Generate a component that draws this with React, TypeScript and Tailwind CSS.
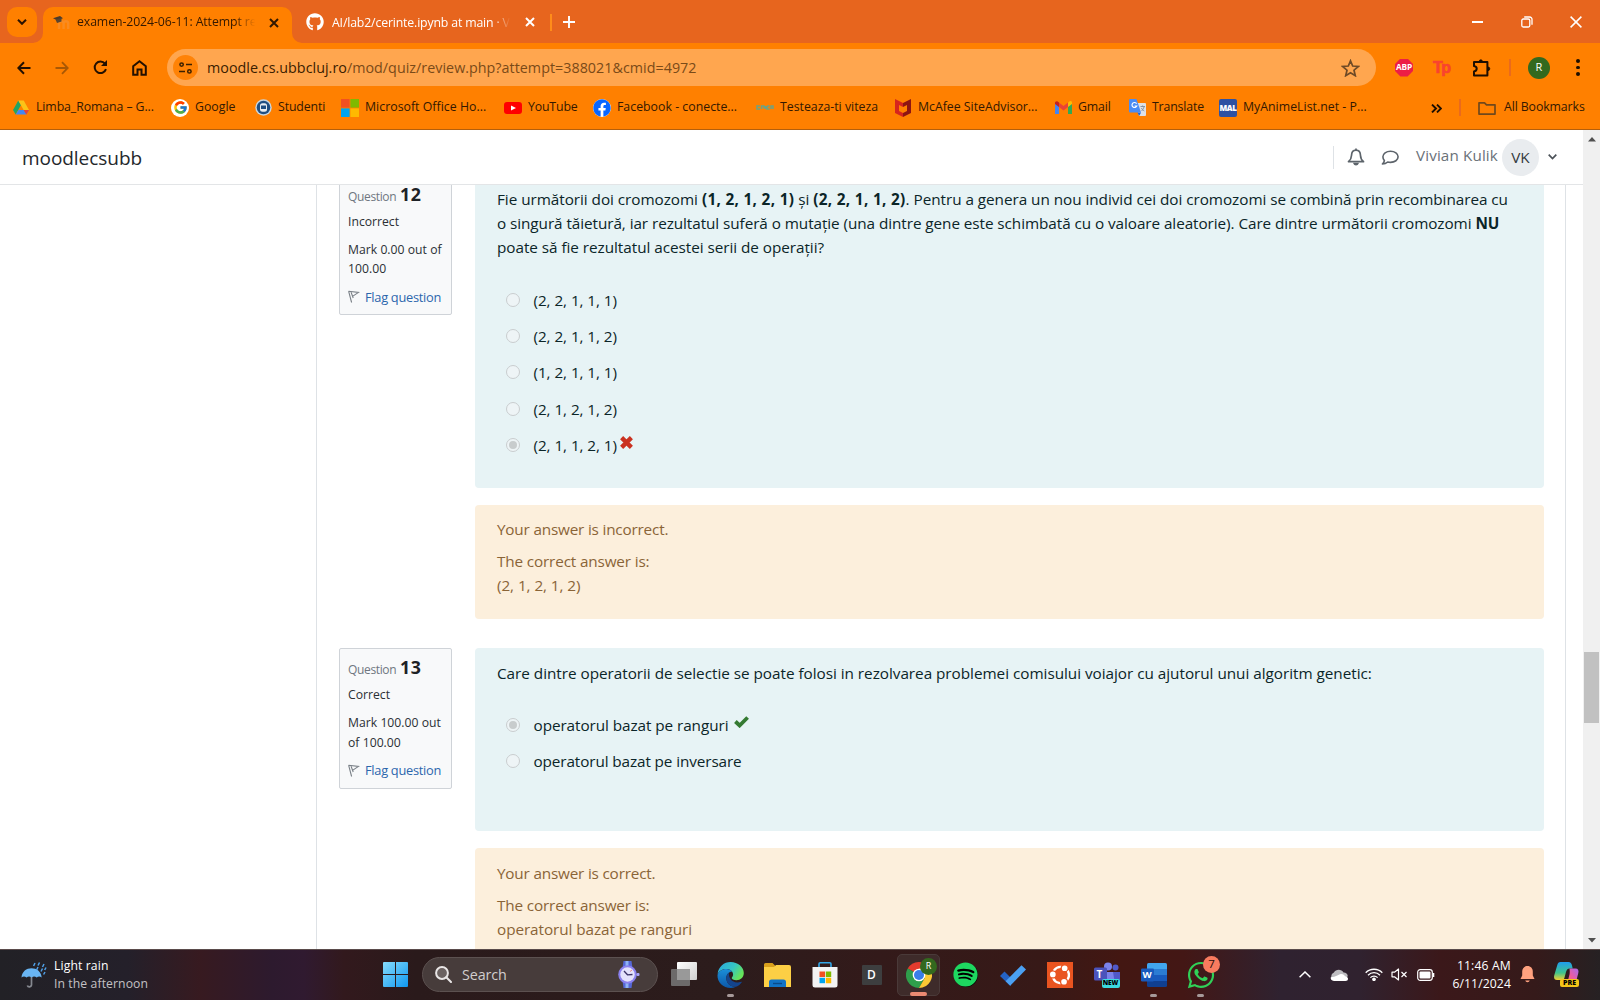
import React from "react";
import { FaGithub, FaFacebook, FaSpotify, FaWhatsapp } from "react-icons/fa";
import { FcGoogle } from "react-icons/fc";
import { SiUbuntu } from "react-icons/si";

type Kids = { children?: React.ReactNode };

/* ---------- small drawings ---------- */

function Cross({ className = "" }: { className?: string }) {
  return (
    <svg className={className} width="10" height="10" viewBox="0 0 10 10" stroke="currentColor" strokeWidth="2" fill="none">
      <path d="M1 1l8 8M9 1l-8 8" />
    </svg>
  );
}

function DriveIcon() {
  return (
    <svg width="16" height="15" viewBox="0 0 16 15">
      <path d="M5.3 0.5L0 10l2.7 4.5L8 5z" fill="#21a464" />
      <path d="M5.3 0.5h5.4L16 10h-5.4z" fill="#fbc318" />
      <path d="M5.4 10H16l-2.7 4.5H2.7z" fill="#4387f5" />
      <path d="M10.6 10H16l-2.7 4.5z" fill="#ea4335" />
    </svg>
  );
}
function GoogleIcon() {
  return (
    <span className="flex size-[18px] items-center justify-center rounded-full bg-white">
      <FcGoogle size={15} />
    </span>
  );
}
function StudentiIcon() {
  return (
    <svg width="17" height="17" viewBox="0 0 17 17">
      <circle cx="8.5" cy="8.5" r="8.2" fill="#c9d6df" />
      <circle cx="8.5" cy="8.5" r="6.800" fill="#1f4f82" />
      <rect x="5" y="4.200" width="7" height="8.600" rx="2.500" fill="#e9eef2" />
      <rect x="6" y="6.500" width="5" height="3.500" fill="#1f4f82" />
    </svg>
  );
}
function MsIcon() {
  return (
    <svg width="18" height="18" viewBox="0 0 18 18">
      <rect width="8.6" height="8.6" fill="#f25022" />
      <rect x="9.4" width="8.6" height="8.6" fill="#7fba00" />
      <rect y="9.4" width="8.6" height="8.6" fill="#00a4ef" />
      <rect x="9.4" y="9.4" width="8.6" height="8.6" fill="#ffb900" />
    </svg>
  );
}
function YoutubeIcon() {
  return (
    <svg width="18" height="12" viewBox="0 0 18 12">
      <rect width="18" height="12" rx="3" fill="#f00" />
      <path d="M7 3.4v5.2L12 6z" fill="#fff" />
    </svg>
  );
}
function FbIcon() {
  return (
    <span className="flex size-[18px] items-center justify-center rounded-full bg-white">
      <FaFacebook size={18} color="#0866ff" />
    </span>
  );
}
function SpeedIcon() {
  return (
    <svg width="18" height="5" viewBox="0 0 18 5" fill="none" stroke="#6fa283" strokeWidth="1.5">
      <path d="M4 1H1v3h3M5.5 4V1H8v2.4M9.5 1v3M11 1h2.6M13.6 4H11V1M15 4V1h2v3" />
    </svg>
  );
}
function McAfeeIcon() {
  return (
    <svg width="16" height="18" viewBox="0 0 16 18">
      <path d="M0 0l8 4v4L4 6v6l4 2v4l-8-4z" fill="#d6251d" />
      <path d="M16 0L8 4v4l4-2v6l-4 2v4l8-4z" fill="#8e1512" />
    </svg>
  );
}
function GmailIcon() {
  return (
    <svg width="17" height="13" viewBox="0 0 17 13">
      <path d="M0 2v11h4V5.5z" fill="#4285f4" />
      <path d="M17 2v11h-4V5.5z" fill="#34a853" />
      <path d="M13 1.8V6l4-3V1.6C17 .2 15.400-.5 14.300.600z" fill="#fbbc04" />
      <path d="M4 6V1.500l4.500 3.400L13 1.500V6L8.500 9.400z" fill="#ea4335" />
      <path d="M0 2v1l4 3V1.500L2.700.5C1.500-.4 0 .5 0 2z" fill="#c5221f" />
    </svg>
  );
}
function TranslateIcon() {
  return (
    <svg width="17" height="17" viewBox="0 0 17 17">
      <path d="M7 4h9a1 1 0 011 1v11a1 1 0 01-1 1h-6z" fill="#dfe1e5" />
      <path d="M8.500 13.500h3.500L10.200 17z" fill="#1a63d8" />
      <path d="M1 0h6.500L12 13.500H1a1 1 0 01-1-1V1a1 1 0 011-1z" fill="#4a8cf5" />
      <path d="M7.600 4.600A2.500 2.500 0 107.800 7H5.600" fill="none" stroke="#fff" strokeWidth="1.200" />
      <path d="M11.500 7.500h4.500M13.600 6.500v1M15 8c-.5 2-1.500 3-2.500 4M12.500 9c.6 1.500 1.500 2.300 2.800 3" fill="none" stroke="#7d8a97" strokeWidth=".9" />
    </svg>
  );
}
function MalIcon() {
  return (
    <span className="flex size-[18px] items-center justify-center rounded-[2px] bg-[#2e51a2] text-[8px] font-extrabold tracking-[-0.4px] text-white">MAL</span>
  );
}

/* ---------- browser chrome ---------- */

const bookmarks = [
  { label: "Limba_Romana – G...", icon: <DriveIcon />, box: "w-[158px]", ic: "w-[16px]", gap: "gap-[7px]", tr: "tracking-[-0.080px]" },
  { label: "Google", icon: <GoogleIcon />, box: "w-[84px]", ic: "w-[18px]", gap: "gap-[6px]", tr: "tracking-[0px]" },
  { label: "Studenti", icon: <StudentiIcon />, box: "w-[86px]", ic: "w-[17px]", gap: "gap-[6px]", tr: "tracking-[-0.1px]" },
  { label: "Microsoft Office Ho...", icon: <MsIcon />, box: "w-[163px]", ic: "w-[18px]", gap: "gap-[6px]", tr: "tracking-[0.030px]" },
  { label: "YouTube", icon: <YoutubeIcon />, box: "w-[89px]", ic: "w-[18px]", gap: "gap-[6px]", tr: "tracking-[-0.15px]" },
  { label: "Facebook - conecte...", icon: <FbIcon />, box: "w-[163px]", ic: "w-[18px]", gap: "gap-[6px]", tr: "tracking-[0.020px]" },
  { label: "Testeaza-ti viteza", icon: <SpeedIcon />, box: "w-[139px]", ic: "w-[18px]", gap: "gap-[6px]", tr: "tracking-[0px]" },
  { label: "McAfee SiteAdvisor...", icon: <McAfeeIcon />, box: "w-[160px]", ic: "w-[16px]", gap: "gap-[7px]", tr: "tracking-[0px]" },
  { label: "Gmail", icon: <GmailIcon />, box: "w-[74px]", ic: "w-[17px]", gap: "gap-[6px]", tr: "tracking-[-0.1px]" },
  { label: "Translate", icon: <TranslateIcon />, box: "w-[90px]", ic: "w-[17px]", gap: "gap-[6px]", tr: "tracking-[-0.150px]" },
  { label: "MyAnimeList.net - P...", icon: <MalIcon />, box: "w-[212px]", ic: "w-[18px]", gap: "gap-[6px]", tr: "tracking-[0.020px]" },
];

function TabStrip() {
  return (
    <div className="flex h-[43px] shrink-0 bg-[#e7651e]">
      <div className="ml-[7px] mt-[7px] flex h-[30px] w-[30px] items-center justify-center rounded-[10px] bg-[#ff8000]">
        <svg width="10" height="6" viewBox="0 0 10 6" fill="none" stroke="#2a1200" strokeWidth="2"><path d="M1 .8l4 4 4-4" /></svg>
      </div>
      <div className="relative ml-[6px] mt-[7px] flex h-[36px] w-[249px] items-center rounded-t-[10px] bg-[#ff8000] pb-[5px] pl-[10px] text-[#331800]">
        <svg className="absolute bottom-0 -left-[10px]" width="10" height="10" viewBox="0 0 10 10"><path d="M10 0v10H0A10 10 0 0010 0z" fill="#ff8000" /></svg>
        <svg className="absolute -right-[10px] bottom-0" width="10" height="10" viewBox="0 0 10 10"><path d="M0 0v10h10A10 10 0 010 0z" fill="#ff8000" /></svg>
        <svg width="17" height="14" viewBox="0 0 17 14">
          <path d="M6 13V7.500a2.300 2.300 0 014.600 0V13m0-5.500a2.300 2.300 0 014.600 0V13" fill="none" stroke="#f98b20" strokeWidth="2.400" />
          <path d="M0 2.200L7 0l3 2.200L4 4.200z" fill="#4b3b2c" />
          <path d="M2.500 3.500L8.500 2v3.500L4 7z" fill="#5a4530" />
        </svg>
        <div className="ml-[7px] w-[180px] overflow-hidden whitespace-nowrap text-[12.300px] tracking-[-0.100px] [mask-image:linear-gradient(90deg,#000_88%,transparent_99%)]">
          examen-2024-06-11: Attempt re
        </div>
        <Cross className="ml-[12px]" />
      </div>
      <div className="flex h-[43px] items-center pl-[14px] pt-[1px] text-white">
        <FaGithub size={18} />
        <div className="ml-[8px] mt-[2px] w-[180px] overflow-hidden whitespace-nowrap text-[12.300px] tracking-[-0.160px] [mask-image:linear-gradient(90deg,#000_90%,transparent_99%)]">
          AI/lab2/cerinte.ipynb at main · Vi
        </div>
        <Cross className="ml-[13px]" />
        <div className="ml-[15px] h-[17px] w-[2px] bg-[#ff8c1a]" />
        <svg className="ml-[11px]" width="12" height="12" viewBox="0 0 12 12" stroke="#fff" strokeWidth="1.900"><path d="M6 0v12M0 6h12" /></svg>
      </div>
      <div className="ml-auto flex h-[43px] items-center pr-[18px]">
        <div className="h-[2px] w-[11px] bg-white" />
        <svg className="ml-[38px]" width="12" height="12" viewBox="0 0 12 12" fill="none" stroke="#fff" strokeWidth="1.300">
          <rect x=".8" y="3" width="8" height="8" rx="1.500" />
          <path d="M3.200 1h5.500A2.300 2.300 0 0111 3.300v5.500" />
        </svg>
        <svg className="ml-[37px]" width="12" height="12" viewBox="0 0 12 12" stroke="#fff" strokeWidth="1.500"><path d="M.6.6l10.800 10.800M11.400.6L.6 11.400" /></svg>
      </div>
    </div>
  );
}

function Toolbar() {
  return (
    <div className="flex h-[43px] shrink-0 items-center pt-[6px]">
      <svg className="ml-[17px] shrink-0" width="14" height="14" viewBox="0 0 14 14" fill="none" stroke="#231000" strokeWidth="2"><path d="M13.500 7H1.500M7 1.200L1.300 7 7 12.800" /></svg>
      <svg className="ml-[24px] shrink-0" width="14" height="14" viewBox="0 0 14 14" fill="none" stroke="#a95804" strokeWidth="1.800"><path d="M.5 7h12M7 1.200L12.700 7 7 12.800" /></svg>
      <svg className="ml-[24px] shrink-0" width="15" height="15" viewBox="0 0 15 15" fill="none" stroke="#231000" strokeWidth="2"><path d="M13 9.200A5.800 5.800 0 1112 3.600" /><path d="M14 0v6H8z" fill="#231000" stroke="none" /></svg>
      <svg className="ml-[24px] shrink-0" width="15" height="16" viewBox="0 0 15 16" fill="none" stroke="#231000" strokeWidth="2"><path d="M1.200 14.800V6.200L7.500 1.300l6.300 4.900v8.600H9.500V9.500h-4v5.300z" /></svg>
      <div className="ml-[20px] flex h-[37px] w-[1209px] shrink-0 items-center rounded-full bg-[#ffa64f] pl-[6px] pr-[16px]">
        <div className="flex size-[25px] items-center justify-center rounded-full bg-[#ff8307]">
          <svg width="13" height="12" viewBox="0 0 13 12" fill="none" stroke="#3b2000" strokeWidth="1.500">
            <circle cx="2.600" cy="2.600" r="1.700" /><path d="M7 2.600h6M0 9.400h6" /><circle cx="10.400" cy="9.400" r="1.700" />
          </svg>
        </div>
        <div className="ml-[9px] whitespace-nowrap text-[14.300px] tracking-[0.030px] text-[#7a4a18]">
          <span className="text-[#3b2000]">moodle.cs.ubbcluj.ro</span>/mod/quiz/review.php?attempt=388021&amp;cmid=4972
        </div>
        <svg className="ml-auto" width="19" height="18" viewBox="0 0 19 18" fill="none" stroke="#6f4a26" strokeWidth="1.700"><path d="M9.500 1.800l2.200 5.200 5.600.5-4.300 3.700 1.300 5.500-4.800-2.900-4.800 2.900L6 11.200 1.700 7.500l5.600-.5z" /></svg>
      </div>
      <div className="ml-[19px] flex size-[18px] shrink-0 items-center justify-center bg-[#ed1e45] text-[8.300px] font-bold tracking-[-0.200px] text-white [clip-path:polygon(30%_0,70%_0,100%_30%,100%_70%,70%_100%,30%_100%,0_70%,0_30%)]">ABP</div>
      <div className="ml-[20px] w-[18px] shrink-0 font-['Liberation_Sans',sans-serif] text-[16px] font-bold leading-4 tracking-[-1.500px] text-[#f9432f] [-webkit-text-stroke:0.700px_#f9432f]">Tp</div>
      <svg className="ml-[21px] shrink-0" width="19" height="18" viewBox="0 0 19 18" fill="none" stroke="#1d0e00" strokeWidth="2">
        <path d="M2 3h13.400v13.400H2v-4c3.600-.7 3.600-4.700 0-5.400z" strokeLinejoin="round" /><path d="M7.200 2.400a1.600 1.600 0 013.200 0zM16 8a1.800 1.800 0 010 3.600z" fill="#1d0e00" strokeWidth=".8" />
      </svg>
      <div className="ml-[18px] h-[17px] w-[2px] shrink-0 bg-[#ea6a1d]" />
      <div className="ml-[17px] flex size-[22px] shrink-0 items-center justify-center rounded-full bg-[#33691e] text-[11px] text-white">R</div>
      <div className="ml-[26px] flex w-[4px] flex-col gap-[3px]">
        <span className="size-[3.500px] rounded-full bg-[#1d0e00]" /><span className="size-[3.500px] rounded-full bg-[#1d0e00]" /><span className="size-[3.500px] rounded-full bg-[#1d0e00]" />
      </div>
    </div>
  );
}

function BookmarkBar() {
  return (
    <div className="flex h-[44px] shrink-0 items-center border-b border-[#b45f0c] pl-[13px] text-[12.300px] text-[#331800]">
      {bookmarks.map((b) => (
        <div key={b.label} className={`flex shrink-0 items-center ${b.box} ${b.gap}`}>
          <span className={`flex shrink-0 items-center justify-center ${b.ic}`}>{b.icon}</span>
          <span className={`whitespace-nowrap ${b.tr}`}>{b.label}</span>
        </div>
      ))}
      <svg className="mt-[1px]" width="11" height="9" viewBox="0 0 11 9" fill="none" stroke="#1d0e00" strokeWidth="1.900"><path d="M1 .6l4 3.900-4 3.900M6 .6l4 3.900-4 3.900" /></svg>
      <div className="ml-[17px] h-[17px] w-[2px] bg-[#ea6a1d]" />
      <svg className="ml-[17px]" width="18" height="14" viewBox="0 0 18 14" fill="none" stroke="#70481c" strokeWidth="1.700"><path d="M1 1.800h5.500l2 2H17v9.300H1z" strokeLinejoin="round" /></svg>
      <span className="ml-[8px] whitespace-nowrap tracking-[-0.100px]">All Bookmarks</span>
    </div>
  );
}

/* ---------- page ---------- */

function SiteHeader() {
  return (
    <div className="flex h-[55px] shrink-0 items-center border-b border-[#e3e5e7] bg-white pl-[22px] pr-[26px]">
      <span className="pt-[2px] text-[19px] tracking-[-0.050px] text-[#24282c]">moodlecsubb</span>
      <div className="ml-auto flex items-center text-[#6a7178]">
        <div className="h-[23px] w-px bg-[#dee2e6]" />
        <svg className="ml-[13px]" width="18" height="18" viewBox="0 0 18 18" fill="none" stroke="#5d646b" strokeWidth="1.700">
          <path d="M9 2.200C5.800 2.200 4.600 4.700 4.500 7.500 4.400 10.500 3.500 12 1.500 13.700h15C14.500 12 13.600 10.500 13.500 7.500 13.400 4.700 12.200 2.200 9 2.200zM9 .4v1.800" strokeLinejoin="round" /><path d="M7.200 15.500c.5 1.600 3.100 1.600 3.600 0z" fill="#5d646b" />
        </svg>
        <svg className="ml-[16px] mt-[2px]" width="18" height="16" viewBox="0 0 18 16" fill="none" stroke="#5d646b" strokeWidth="1.600">
          <path d="M9.500 1.200c4.300 0 7.600 2.500 7.600 5.600s-3.300 5.600-7.600 5.600c-1 0-2-.1-2.800-.4-1.300 1.200-3 2-5.300 2 1-1 1.800-2.200 2-3.400C2.400 9.600 1.900 8.300 1.900 6.800c0-3.100 3.300-5.600 7.600-5.600z" strokeLinejoin="round" />
        </svg>
        <span className="ml-[17px] w-[82px] whitespace-nowrap pb-[4px] text-[15.200px] tracking-[0.140px]">Vivian Kulik</span>
        <div className="ml-[4px] flex size-[37px] items-center justify-center rounded-full bg-[#e9ecef] text-[15.300px] text-[#343a40]">VK</div>
        <svg className="ml-[9px]" width="9" height="6" viewBox="0 0 9 6" fill="none" stroke="#4b5157" strokeWidth="1.700"><path d="M.7.7l3.800 3.800L8.300.7" /></svg>
      </div>
    </div>
  );
}

function InfoBox({ num, state, mark }: { num: string; state: string; mark: [string, string] }) {
  return (
    <div className="h-[140.500px] w-[113px] shrink-0 rounded-[2px] border border-[#cfd3d8] bg-[#f8f9fa] pl-[8px] text-[12.200px] text-[#2b3035]">
      <div className="mt-[10px] flex h-[18px] items-baseline whitespace-nowrap leading-[18px]">
        <span className="w-[52px] text-[12px] tracking-[-0.350px] text-[#6f7780]">Question</span>
        <span className="text-[17.800px] font-bold leading-[16px] tracking-[0.700px] text-[#1d2125]">{num}</span>
      </div>
      <div className="mt-[8px] leading-[20px] tracking-[0px]">{state}</div>
      <div className="mt-[8px] whitespace-nowrap leading-[19.500px] tracking-[0.020px]">{mark[0]}<br />{mark[1]}</div>
      <div className="mt-[8px] flex items-center leading-[20px] text-[#2c66ad]">
        <svg width="12" height="13" viewBox="0 0 12 13" fill="none" stroke="#7a8087" strokeWidth="1.100"><path d="M.6 1.200l9.900 1.200-6 4M.6 1.200l3 11.300M3 2l2.200 6" /></svg>
        <span className="ml-[5px] whitespace-nowrap text-[12.800px] tracking-[-0.270px]">Flag question</span>
      </div>
    </div>
  );
}

function Radio({ on }: { on?: boolean }) {
  return (
    <span className="flex size-[14px] shrink-0 items-center justify-center rounded-full border border-[#c9cdcf] bg-[#eef4f6]">
      {on && <span className="size-[8px] rounded-full bg-[#c8cccd]" />}
    </span>
  );
}

function Option({ on, children }: Kids & { on?: boolean }) {
  return (
    <div className="flex h-[36.400px] items-center whitespace-nowrap pl-[8.500px]">
      <Radio on={on} />
      <span className="ml-[14px] flex items-center">{children}</span>
    </div>
  );
}

function Feedback({ className, lines }: { className: string; lines: [string, string] }) {
  return (
    <div className={`mt-[17px] rounded-[4px] bg-[#fcefdc] pl-[22px] pt-[12.500px] text-[#8a6437] ${className}`}>
      <div className="tracking-[-0.190px]">{lines[0]}</div>
      <div className="mt-[8px]"><span className="tracking-[-0.150px]">The correct answer is:</span><br />{lines[1]}</div>
    </div>
  );
}

function Page() {
  return (
    <div className="flex min-h-0 flex-1 overflow-hidden bg-white">
      <div className="ml-[316px] w-[1250px] shrink-0 border-x border-[#dee2e6] pl-[22px]">
        <div className="-mt-[10.500px] flex">
          <InfoBox num="12" state="Incorrect" mark={["Mark 0.00 out of", "100.00"]} />
          <div className="ml-[23px] w-[1069px] text-[15.300px] leading-[24.200px] tracking-[-0.070px]">
            <div className="h-[313px] rounded-[4px] bg-[#e7f3f5] pl-[22px] pt-[12px] text-[#0b2528]">
              <div className="whitespace-nowrap">
                <span className="tracking-[-0.045px]">Fie următorii doi cromozomi <b className="tracking-[0.330px]">(1, 2, 1, 2, 1)</b> și <b className="tracking-[0.330px]">(2, 2, 1, 1, 2)</b>. Pentru a genera un nou individ cei doi cromozomi se combină prin recombinarea cu</span><br />
                o singură tăietură, iar rezultatul suferă o mutație (una dintre gene este schimbată cu o valoare aleatorie). Care dintre următorii cromozomi <b>NU</b><br />
                <span className="tracking-[-0.045px]">poate să fie rezultatul acestei serii de operații?</span>
              </div>
              <div className="mt-[22.300px]">
                <Option>(2, 2, 1, 1, 1)</Option>
                <Option>(2, 2, 1, 1, 2)</Option>
                <Option>(1, 2, 1, 1, 1)</Option>
                <Option>(2, 1, 2, 1, 2)</Option>
                <Option on>
                  (2, 1, 1, 2, 1)
                  <svg className="mb-[5px] ml-[3px]" width="13" height="13" viewBox="0 0 12 12" stroke="#ca3120" strokeWidth="4"><path d="M1.500 1.500l9 9M10.500 1.500l-9 9" /></svg>
                </Option>
              </div>
            </div>
            <Feedback className="h-[114px]" lines={["Your answer is incorrect.", "(2, 1, 2, 1, 2)"]} />
          </div>
        </div>
        <div className="mt-[29.500px] flex">
          <InfoBox num="13" state="Correct" mark={["Mark 100.00 out", "of 100.00"]} />
          <div className="ml-[23px] w-[1069px] text-[15.300px] leading-[24.200px] tracking-[-0.070px]">
            <div className="h-[183px] rounded-[4px] bg-[#e7f3f5] pl-[22px] pt-[12.500px] text-[#0b2528]">
              <div className="whitespace-nowrap tracking-[-0.030px]">Care dintre operatorii de selectie se poate folosi in rezolvarea problemei comisului voiajor cu ajutorul unui algoritm genetic:</div>
              <div className="mt-[21.800px]">
                <Option on>
                  operatorul bazat pe ranguri
                  <svg className="mb-[6px] ml-[6px]" width="15" height="12" viewBox="0 0 15 12" fill="none" stroke="#357a32" strokeWidth="3.800"><path d="M1.400 5.500L5.600 9.500 13.600 1.500" /></svg>
                </Option>
                <Option><span className="tracking-[-0.110px]">operatorul bazat pe inversare</span></Option>
              </div>
            </div>
            <Feedback className="h-[140px]" lines={["Your answer is correct.", "operatorul bazat pe ranguri"]} />
          </div>
        </div>
      </div>
    </div>
  );
}

function Scrollbar() {
  return (
    <div className="flex w-[17px] shrink-0 flex-col items-center bg-[#f0f0f0]">
      <svg className="mt-[7px]" width="8" height="5" viewBox="0 0 8 5"><path d="M4 0l4 4.500H0z" fill="#505050" /></svg>
      <div className="mt-[510px] h-[71px] w-[15px] bg-[#c1c1c1]" />
      <svg className="mt-[215px]" width="8" height="5" viewBox="0 0 8 5"><path d="M4 4.500L8 0H0z" fill="#505050" /></svg>
    </div>
  );
}

/* ---------- taskbar ---------- */

function Slot({ children, run }: Kids & { run?: boolean }) {
  return (
    <div className="relative flex h-[42px] w-[47px] shrink-0 items-center justify-center">
      {children}
      {run && <span className="absolute bottom-[-1px] h-[3px] w-[7px] rounded-full bg-[#a79a9a]" />}
    </div>
  );
}

function EdgeIcon() {
  return (
    <svg width="27" height="26" viewBox="0 0 27 26">
      <defs>
        <linearGradient id="eg" x1="0" y1="0" x2="1" y2=".5"><stop offset="0" stopColor="#2aa5e0" /><stop offset=".6" stopColor="#35c6c3" /><stop offset="1" stopColor="#66e35a" /></linearGradient>
        <linearGradient id="eb" x1="0" y1="0" x2="0" y2="1"><stop offset="0" stopColor="#1b8fd8" /><stop offset="1" stopColor="#0c57a8" /></linearGradient>
      </defs>
      <path d="M.6 12C1.500 4.500 7 0 13.600 0 21 0 26.800 5 26.800 11c0 4.300-3.300 7.200-7.300 7.200-3 0-4.800-1-4.800-2.200 0-.8 1.400-1.500 1.400-3.600 0-2.700-2.600-5.400-6.500-5.400C5.500 7 2 9 .6 12z" fill="url(#eg)" />
      <path d="M.5 13C1.500 9.500 5 7 9.400 7c2.500 0 4.600 1 5.700 2.500-3 0-5.800 3-5.800 6.500 0 5.200 4.600 9.400 9.700 8.700A13.300 13.300 0 0113.600 26C6.200 26 0 20 .5 13z" fill="url(#eb)" />
      <path d="M9.300 16c0-2.500 1-4.300 2.800-5.500-1.200 5.500 3.600 11 9.800 9.800 1.300-.2 2.300-.8 2.800-.6.600.3-1.800 3.600-5.700 5-5.100.8-9.700-3.500-9.700-8.700z" fill="#14448c" />
    </svg>
  );
}

function Taskbar() {
  return (
    <div className="flex h-[51px] shrink-0 items-center border-t border-[#5a4b4b] bg-[linear-gradient(90deg,#222126_0%,#24202a_8%,#371a20_12.500%,#2d1a2e_17%,#301a30_19%,#32191d_21.500%,#2a1a1b_26%,#2c1c1c_45%,#331a1a_55%,#371917_65%,#431712_70%,#431715_74%,#2f2230_80%,#30222f_85%,#3b181a_90%,#351a1a_96%,#262123_100%)] pb-px text-white">
      <svg className="ml-[21px] shrink-0" width="26" height="26" viewBox="0 0 26 26">
        <path d="M10.500 12v11a2.200 2.200 0 01-4.200.5" fill="none" stroke="#85888f" strokeWidth="1.700" />
        <path d="M.5 15.500C1 9.500 5.500 6.300 10.500 6.300s9.700 3.200 10.200 9.200c-1.800-1.300-3.300-1.300-5 0-1.700-1.300-3.400-1.300-5.100 0-1.700-1.300-3.400-1.300-5.100 0-1.700-1.300-3.300-1.300-5 0z" fill="#69b5f3" />
        <path d="M14 1l-1.400 3M18.500 .5L17 3.500M23 2l-1.500 3M17 5l-1.400 3M21.500 6.500L20 9.500M25 5.500L23.700 8M24 10l-1.400 2.500" stroke="#4fa0e8" strokeWidth="1.500" />
      </svg>
      <div className="ml-[7px] w-[322px] text-[12.200px] leading-[17.300px]">
        <div className="tracking-[0.120px]">Light rain</div>
        <div className="tracking-[0.100px] text-[#c3c1c4]">In the afternoon</div>
      </div>
      <svg className="ml-[7px] shrink-0" width="25" height="25" viewBox="0 0 25 25">
        <defs><linearGradient id="win" x1="0" y1="0" x2="1" y2="1"><stop offset="0" stopColor="#86dcfc" /><stop offset="1" stopColor="#0f97ef" /></linearGradient></defs>
        <path d="M0 1a1 1 0 011-1h11v12H0zM13 0h11a1 1 0 011 1v11H13zM0 13h12v12H1a1 1 0 01-1-1zM13 13h12v11a1 1 0 01-1 1H13z" fill="url(#win)" />
      </svg>
      <div className="ml-[14px] flex h-[35px] w-[236px] shrink-0 items-center rounded-full border border-[#5c5150] bg-[#473c3b] pl-[12px] pr-[17px]">
        <svg width="17" height="17" viewBox="0 0 17 17" fill="none" stroke="#e9e6e6" strokeWidth="2"><circle cx="7" cy="7" r="5.900" fill="#6b6261" /><path d="M11.300 11.300l4.700 4.700" strokeLinecap="round" /></svg>
        <span className="ml-[10px] text-[14.300px] tracking-[-0.100px] text-[#d2cece]">Search</span>
        <svg className="ml-auto" width="23" height="27" viewBox="0 0 23 27">
          <path d="M6.500 0h8l1 7h-10zM5.500 20h10l-1 7h-8z" fill="#5567d6" /><path d="M8.500 0h3v27h-3z" fill="#8fb4f4" />
          <circle cx="10.500" cy="13.500" r="9.300" fill="#8a80ee" /><circle cx="10.500" cy="13.500" r="7.200" fill="#e4e2fb" /><rect x="19.500" y="12" width="3" height="3" rx="1" fill="#a9a4f4" />
          <path d="M7 10l3.500 3.800 5-.3" fill="none" stroke="#3a3266" strokeWidth="1.300" /><path d="M13 10.500l2-1.500" stroke="#e98a86" />
        </svg>
      </div>
      <div className="ml-[2px] flex shrink-0">
        <Slot>
          <svg width="26" height="25" viewBox="0 0 26 25"><defs><linearGradient id="tv" x1="0" y1="0" x2="1" y2="1"><stop offset="0" stopColor="#fff" /><stop offset="1" stopColor="#cfcfcf" /></linearGradient></defs><rect x="6" width="20" height="18" rx="1" fill="url(#tv)" /><rect y="7" width="19" height="17" rx="1" fill="#6c6a6a" /><rect x="6" y="7" width="13" height="11" fill="#999" /></svg>
        </Slot>
        <Slot run><EdgeIcon /></Slot>
        <Slot>
          <svg width="27" height="24" viewBox="0 0 27 24"><path d="M0 1.500A1.500 1.500 0 011.500 0h7L11 2.500V6H0z" fill="#d9a01c" /><path d="M0 4h10l2-2h13a2 2 0 012 2v20H0z" fill="#fccf45" /><path d="M5 24v-5a2.500 2.500 0 012.500-2.500h12A2.500 2.500 0 0122 19v5z" fill="#1173c6" /><path d="M9 20.500h9" stroke="#0a4a89" strokeWidth="1.400" /></svg>
        </Slot>
        <Slot>
          <svg width="26" height="26" viewBox="0 0 26 26"><path d="M7 6V2a1.200 1.200 0 011.200-1.200h9.600A1.200 1.200 0 0119 2v4" fill="none" stroke="#33a7e8" strokeWidth="1.600" /><path d="M.5 5h25v18a2.500 2.500 0 01-2.500 2.500H3A2.500 2.500 0 01.5 23z" fill="#f3f3f3" /><path d="M7.500 9.500H13V15H7.500z" fill="#f25022" /><path d="M13.800 9.500h5.400V15h-5.400z" fill="#7fba00" /><path d="M7.500 15.800H13v5.400H7.500z" fill="#00a4ef" /><path d="M13.800 15.800h5.400v5.400h-5.400z" fill="#ffb900" /></svg>
        </Slot>
        <Slot><span className="flex size-[20px] items-center justify-center rounded-[1px] bg-[#3d3e3f] text-[12px] font-semibold">D</span></Slot>
        <div className="relative flex h-[42px] w-[47px] items-center justify-center">
          <div className="flex h-[42px] w-[43px] items-center justify-center rounded-[5px] border border-[#4a3a39] bg-[#3e2b2a]">
            <svg width="26" height="26" viewBox="0 0 26 26">
              <path d="M13 13L1.740 6.500A13 13 0 0124.260 6.500z" fill="#e33b2e" /><path d="M13 13L1.740 6.500A13 13 0 0013 26l5.600-9.700z" fill="#2f9e4b" /><path d="M13 13h0L24.260 6.500A13 13 0 0113 26l5.600-9.800z" fill="#fcc934" /><path d="M13 6.500h11.260" stroke="#fcc934" strokeWidth=".5" />
              <circle cx="13" cy="13" r="6.300" fill="#fff" /><circle cx="13" cy="13" r="5" fill="#3a7de8" />
            </svg>
          </div>
          <span className="absolute right-[5px] top-[4px] flex size-[17px] items-center justify-center rounded-full bg-[#33691e] text-[9px]">R</span>
          <span className="absolute bottom-[0px] h-[4px] w-[17px] rounded-full bg-[#ec8a72]" />
        </div>
        <Slot><span className="flex size-[24px] items-center justify-center rounded-full bg-black"><FaSpotify size={25} color="#1ed760" className="shrink-0" /></span></Slot>
        <Slot>
          <svg width="26" height="22" viewBox="0 0 26 22"><path d="M0 12l4.500-4.500 6 6-0 8.500z" fill="#2563c4" /><path d="M5.600 17.300L21.500 1.200 26 5.500 10.200 21.800z" fill="#4ba0f2" /></svg>
        </Slot>
        <Slot><span className="flex size-[26px] items-center justify-center bg-[#e95420]"><SiUbuntu size={20} color="#fff" /></span></Slot>
        <Slot>
          <div className="relative size-[26px]">
            <svg width="26" height="26" viewBox="0 0 26 26"><circle cx="14" cy="4.500" r="4" fill="#7b83eb" /><circle cx="21.500" cy="5.500" r="3" fill="#5059c9" /><path d="M9 10h16v7a6 6 0 01-6 6h-4a6 6 0 01-6-6z" fill="#7b83eb" /><path d="M19 10h7v7a5 5 0 01-5 5z" fill="#5059c9" /><rect y="5.500" width="13" height="13" rx="1.500" fill="#4b53bc" /></svg>
            <span className="absolute left-[3px] top-[5px] text-[10px] font-bold leading-[14px]">T</span>
            <span className="absolute left-[8px] top-[17px] flex h-[9px] w-[18px] items-center justify-center rounded-[2px] bg-[#3cdbe0] text-[6.500px] font-extrabold text-black">NEW</span>
          </div>
        </Slot>
        <Slot run>
          <div className="relative h-[24px] w-[26px]">
            <svg width="26" height="24" viewBox="0 0 26 24"><path d="M6 1.500A1.500 1.500 0 017.500 0h17A1.500 1.500 0 0126 1.500V6H6z" fill="#41a5ee" /><path d="M6 6h20v6H6z" fill="#2b7cd3" /><path d="M6 12h20v6H6z" fill="#185abd" /><path d="M6 18h20v4.500a1.500 1.500 0 01-1.500 1.500h-17A1.500 1.500 0 016 22.500z" fill="#103f91" /><rect y="5.500" width="13" height="13" rx="1.200" fill="#185abd" /></svg>
            <span className="absolute left-[1px] top-[5px] w-[11px] text-center text-[9.500px] font-bold leading-[14px]">W</span>
          </div>
        </Slot>
        <div className="relative flex h-[42px] w-[47px] items-center justify-center">
          <FaWhatsapp size={30} color="#30d158" />
          <span className="absolute right-[4px] top-[2px] flex size-[17px] items-center justify-center rounded-full bg-[#f87b5f] text-[11.500px] text-[#2b0f0a]">7</span>
          <span className="absolute bottom-[-1px] h-[3px] w-[7px] rounded-full bg-[#a79a9a]" />
        </div>
      </div>
      <svg className="ml-[75px] shrink-0" width="12" height="7" viewBox="0 0 12 7" fill="none" stroke="#fff" strokeWidth="1.500"><path d="M.6 6.200L6 1l5.400 5.200" /></svg>
      <svg className="ml-[19px] shrink-0" width="18" height="12" viewBox="0 0 18 12"><path d="M4.500 11.500a4.200 4.200 0 01-.6-8A5.600 5.600 0 0113.500 3.500a4 4 0 014.300 4L4.500 11.500z" fill="#bdbcc0" /><path d="M4 12C1.500 12 .3 10 .8 8.300 6 8 8 5.500 11 5c2.500 0 3.500 1.500 4 2.200 2 .2 3 1.400 3 2.600 0 1.400-1 2.200-2.500 2.200z" fill="#fff" /></svg>
      <svg className="ml-[17px] shrink-0" width="18" height="13" viewBox="0 0 18 13" fill="none" stroke="#fff" strokeWidth="1.300"><path d="M.7 4.700a11.700 11.700 0 0116.600 0M3 7.200a8.500 8.500 0 0112 0M5.400 9.600a5.100 5.100 0 017.200 0" /><circle cx="9" cy="11.300" r="1.200" fill="#fff" /></svg>
      <svg className="ml-[8px] shrink-0" width="17" height="13" viewBox="0 0 17 13" fill="none" stroke="#fff" strokeWidth="1.200"><path d="M1 4.200h2.500L7.500 1v11L3.500 8.800H1z" strokeLinejoin="round" /><path d="M10.500 4l5 5M15.500 4l-5 5" /></svg>
      <svg className="ml-[9px] shrink-0" width="18" height="12" viewBox="0 0 18 12"><rect x=".7" y=".7" width="14.600" height="10.600" rx="2.500" fill="none" stroke="#fff" strokeWidth="1.200" /><rect x="2.500" y="2.500" width="11" height="7" rx="1" fill="#fff" /><path d="M16.500 4v4" stroke="#fff" strokeWidth="1.600" /></svg>
      <div className="ml-auto whitespace-nowrap text-right text-[12.200px] leading-[17.300px]">
        <div className="tracking-[0.150px]">11:46 AM</div>
        <div className="tracking-[0.100px]">6/11/2024</div>
      </div>
      <svg className="ml-[9px] shrink-0" width="15" height="17" viewBox="0 0 15 17" fill="#ffa17f"><path d="M7.500 0C4.300 0 2.200 2.400 2.200 5.500v4L.5 13h14l-1.700-3.500v-4C12.800 2.400 10.700 0 7.500 0zM5.200 14.500a2.400 2.400 0 004.600 0z" /></svg>
      <div className="relative ml-[19px] mr-[21px] h-[26px] w-[25px] shrink-0">
        <svg width="25" height="24" viewBox="0 0 25 24">
          <defs>
            <linearGradient id="c1" x1="0" y1="0" x2="0" y2="1"><stop offset="0" stopColor="#1f9df0" /><stop offset=".6" stopColor="#3fc48c" /><stop offset="1" stopColor="#f3d032" /></linearGradient>
            <linearGradient id="c2" x1="1" y1="0" x2="0" y2="1"><stop offset="0" stopColor="#a66bf0" /><stop offset=".5" stopColor="#ee5c9c" /><stop offset="1" stopColor="#f88a3c" /></linearGradient>
          </defs>
          <path d="M6.500 0h8c2 0 3 1.500 3.500 3.500l.7 3h-3c-2 0-3 1-3.700 3.500l-1.600 6c-.6 1.500-1.500 2-3 2H3c-2.500 0-3.400-2-2.800-4.500L3.300 3C3.800 1 4.800 0 6.500 0z" fill="url(#c1)" />
          <path d="M15.500 6.500h6c2.500 0 3.500 2 2.800 4.500L22 20c-.6 2.500-1.500 4-4 4h-7c2 0 2-2 2.600-4l2-8c.5-2.500-.1-5.500-.1-5.500z" fill="url(#c2)" />
        </svg>
        <span className="absolute left-[6px] top-[17px] flex h-[8px] w-[19px] items-center justify-center rounded-[2px] bg-[#f5c518] text-[7px] font-extrabold leading-[8px] text-black">PRE</span>
      </div>
    </div>
  );
}

export default function App() {
  return (
    <div className="flex h-[1000px] w-[1600px] flex-col overflow-hidden bg-[#ff8000] font-['Open_Sans','Noto_Sans',sans-serif]">
      <TabStrip />
      <Toolbar />
      <BookmarkBar />
      <div className="flex min-h-0 flex-1">
        <div className="flex min-w-0 flex-1 flex-col">
          <SiteHeader />
          <Page />
        </div>
        <Scrollbar />
      </div>
      <Taskbar />
    </div>
  );
}
